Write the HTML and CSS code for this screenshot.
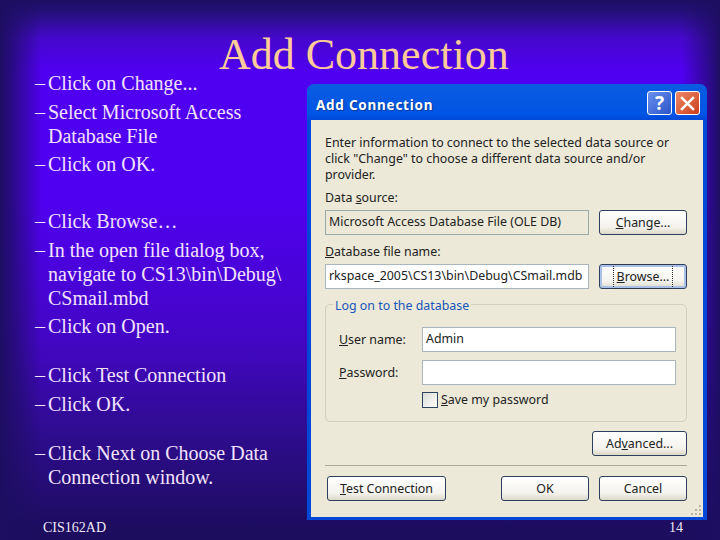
FILE: index.html
```html
<!DOCTYPE html>
<html lang="en">
<head>
<meta charset="utf-8">
<title>Add Connection</title>
<link rel="stylesheet" href="styles.css">
</head>
<body>
<main class="slide">
  <h1 class="slide-title">Add Connection</h1>
  <div class="slide-body">
    <div class="steps">
      <ul class="group">
        <li><span class="dash">–</span><span>Click on Change...</span></li>
        <li><span class="dash">–</span><span>Select Microsoft Access<br>Database File</span></li>
        <li><span class="dash">–</span><span>Click on OK.</span></li>
      </ul>
      <ul class="group group-wide">
        <li><span class="dash">–</span><span>Click Browse…</span></li>
        <li><span class="dash">–</span><span>In the open file dialog box,<br>navigate to CS13\bin\Debug\<br>CSmail.mbd</span></li>
        <li><span class="dash">–</span><span>Click on Open.</span></li>
      </ul>
      <ul class="group">
        <li><span class="dash">–</span><span>Click Test Connection</span></li>
        <li><span class="dash">–</span><span>Click OK.</span></li>
      </ul>
      <ul class="group">
        <li><span class="dash">–</span><span>Click Next on Choose Data<br>Connection window.</span></li>
      </ul>
    </div>
    <section class="window">
      <header class="titlebar">
        <span class="titlebar-text">Add Connection</span>
        <span class="caption-btn caption-help">?</span>
        <span class="caption-btn caption-close">
          <svg viewBox="0 0 16 16" width="17" height="17"><path d="M2 2 14 14M14 2 2 14" stroke="#fff" stroke-width="2.4" fill="none"/></svg>
        </span>
      </header>
      <div class="client">
        <p class="intro">Enter information to connect to the selected data source or<br>click "Change" to choose a different data source and/or<br>provider.</p>
        <div class="label label-source">Data <u>s</u>ource:</div>
        <div class="field-row">
          <div class="field field-readonly">Microsoft Access Database File (OLE DB)</div>
          <div class="btn btn-side"><span><u>C</u>hange...</span></div>
        </div>
        <div class="label label-file"><u>D</u>atabase file name:</div>
        <div class="field-row">
          <div class="field">rkspace_2005\CS13\bin\Debug\CSmail.mdb</div>
          <div class="btn btn-side btn-focus"><span><u>B</u>rowse...</span></div>
        </div>
        <div class="groupbox">
          <span class="legend">Log on to the database</span>
          <div class="login-row">
            <span class="login-label"><u>U</u>ser name:</span>
            <div class="field login-input">Admin</div>
          </div>
          <div class="login-row login-row-second">
            <span class="login-label"><u>P</u>assword:</span>
            <div class="field login-input"></div>
          </div>
          <div class="check-row">
            <span class="checkbox"></span>
            <span><u>S</u>ave my password</span>
          </div>
        </div>
        <div class="advanced-row">
          <div class="btn btn-advanced">Ad<u>v</u>anced...</div>
        </div>
        <div class="separator"></div>
        <div class="action-row">
          <div class="btn btn-test"><span><u>T</u>est Connection</span></div>
          <div class="action-right">
            <div class="btn btn-side">OK</div>
            <div class="btn btn-side">Cancel</div>
          </div>
        </div>
        <svg class="grip" viewBox="0 0 12 12" width="12" height="12"><path d="M9 1h2v2H9zM5 5h2v2H5zM9 5h2v2H9zM1 9h2v2H1zM5 9h2v2H5zM9 9h2v2H9z" fill="#b8b4a4"/></svg>
      </div>
    </section>
  </div>
  <footer class="slide-footer">
    <span>CIS162AD</span>
    <span>14</span>
  </footer>
</main>
</body>
</html>
```
FILE: styles.css
```css
* { box-sizing: border-box; }
html, body { margin: 0; padding: 0; }
body { width: 720px; height: 540px; overflow: hidden; }

.slide {
  width: 720px;
  height: 540px;
  display: flex;
  flex-direction: column;
  font-family: "Liberation Serif", serif;
  color: #f3e2ff;
  background:
    linear-gradient(to right, #1d0e62 0, rgba(29,14,98,.75) 12px, rgba(29,14,98,0) 42px),
    linear-gradient(to left, #1d0e62 0, rgba(29,14,98,.7) 10px, rgba(29,14,98,0) 38px),
    linear-gradient(to bottom, #1d0e62 0, #24107a 12px, #4508cc 38px, #5000f0 70px, #5000f0 200px, #4306c4 340px, #2f0c90 430px, #1c0d5e 530px);
}

.slide-title {
  margin: 0;
  height: 71px;
  padding: 29px 0 0 219px;
  font-size: 44px;
  line-height: 52px;
  font-weight: 400;
  color: #ffcc99;
  white-space: nowrap;
}

.slide-body {
  flex: 1;
  display: flex;
  min-height: 0;
}

.steps {
  width: 307px;
  padding-left: 35px;
  font-size: 20px;
  line-height: 24px;
  flex: none;
}
.group { list-style: none; margin: 0 0 25px; padding: 0; }
.group-wide { margin-bottom: 25px; margin-top: 33px; }
.group li { display: flex; margin-top: 4.5px; }
.group li:first-child { margin-top: 0; }
.dash { width: 13px; flex: none; }

.window {
  width: 400px;
  height: 436px;
  margin-top: 13px;
  flex: none;
  display: flex;
  flex-direction: column;
  background: linear-gradient(to bottom, #0a5ce0 0, #0055e5 30px, #0048d8 36px);
  border-radius: 7px 7px 0 0;
  padding: 0 4px 3px;
  font-family: "Noto Sans", "Liberation Sans", sans-serif;
  font-size: 12.4px;
  color: #222;
}

.titlebar {
  height: 36px;
  flex: none;
  display: flex;
  align-items: center;
  gap: 3px;
  padding: 2px 3px 0 5px;
}
.titlebar-text {
  flex: 1;
  padding-top: 3px;
  color: #fff;
  font-weight: 700;
  font-size: 13.5px;
  letter-spacing: .75px;
  text-shadow: 1px 1px 1px #003a9a;
}
.caption-btn {
  width: 25px;
  height: 24px;
  border: 1px solid #fff;
  border-radius: 3px;
  display: flex;
  align-items: center;
  justify-content: center;
  color: #fff;
}
.caption-help {
  background: linear-gradient(135deg, #6a90ee, #2a55c8);
  font-size: 19px;
  font-weight: 700;
}
.caption-close { background: linear-gradient(135deg, #ee8a66, #cc3d1c); }

.client {
  position: relative;
  flex: 1;
  background: #ece9d8;
  padding: 15px 16px 0 14px;
}

.intro { margin: 0; line-height: 16px; }
.label { height: 16px; line-height: 16px; }
.label-source { margin-top: 7px; }
.label-file { margin-top: 9px; }

.field-row { display: flex; justify-content: space-between; margin-top: 4px; }
.field {
  height: 25px;
  width: 264px;
  background: #fff;
  border: 1px solid #a9b6bd;
  padding: 0 3px;
  line-height: 21px;
  white-space: nowrap;
  overflow: hidden;
}
.field-readonly { background: #ece9d8; border-color: #9aa; }

.btn {
  height: 25px;
  border: 1px solid #2d3f5c;
  border-radius: 3px;
  background: linear-gradient(to bottom, #fff 0, #f4f3ee 70%, #dcd8c8 100%);
  display: flex;
  align-items: center;
  justify-content: center;
  white-space: nowrap;
}
.btn-side { width: 88px; }
.btn-focus { box-shadow: inset 0 0 0 2px #a9c0e8; }
.btn-focus span { outline: 1px dotted #333; outline-offset: 3px; }
.btn-advanced { width: 95px; }
.btn-test { width: 119px; }

.groupbox {
  position: relative;
  margin-top: 15px;
  height: 118px;
  border: 1px solid #d0d0bf;
  border-radius: 5px;
  padding: 22px 10px 0 13px;
}
.legend {
  position: absolute;
  left: 7px;
  top: -7px;
  padding: 0 2px;
  background: #ece9d8;
  color: #1a54b8;
  line-height: 16px;
}
.login-row { display: flex; align-items: center; }
.login-row-second { margin-top: 8px; }
.login-label { width: 83px; flex: none; }
.login-input { width: 255px; }
.check-row {
  display: flex;
  align-items: center;
  gap: 3px;
  margin-top: 6px;
  margin-left: 83px;
}
.checkbox {
  width: 16px;
  height: 16px;
  border: 1px solid #2d4460;
  background: linear-gradient(135deg, #dcdcd4, #fff);
}

.advanced-row { display: flex; justify-content: flex-end; margin-top: 9px; }
.separator { height: 1px; background: #aca899; margin-top: 9px; }
.action-row { display: flex; justify-content: space-between; margin-top: 10px; padding-left: 2px; }
.action-right { display: flex; gap: 10px; }

.grip { position: absolute; right: 1px; bottom: 1px; }

.slide-footer {
  height: 22px;
  flex: none;
  display: flex;
  justify-content: space-between;
  padding: 1px 37px 0 43px;
  font-size: 14px;
  line-height: 18px;
  color: #efe8f8;
}
```
